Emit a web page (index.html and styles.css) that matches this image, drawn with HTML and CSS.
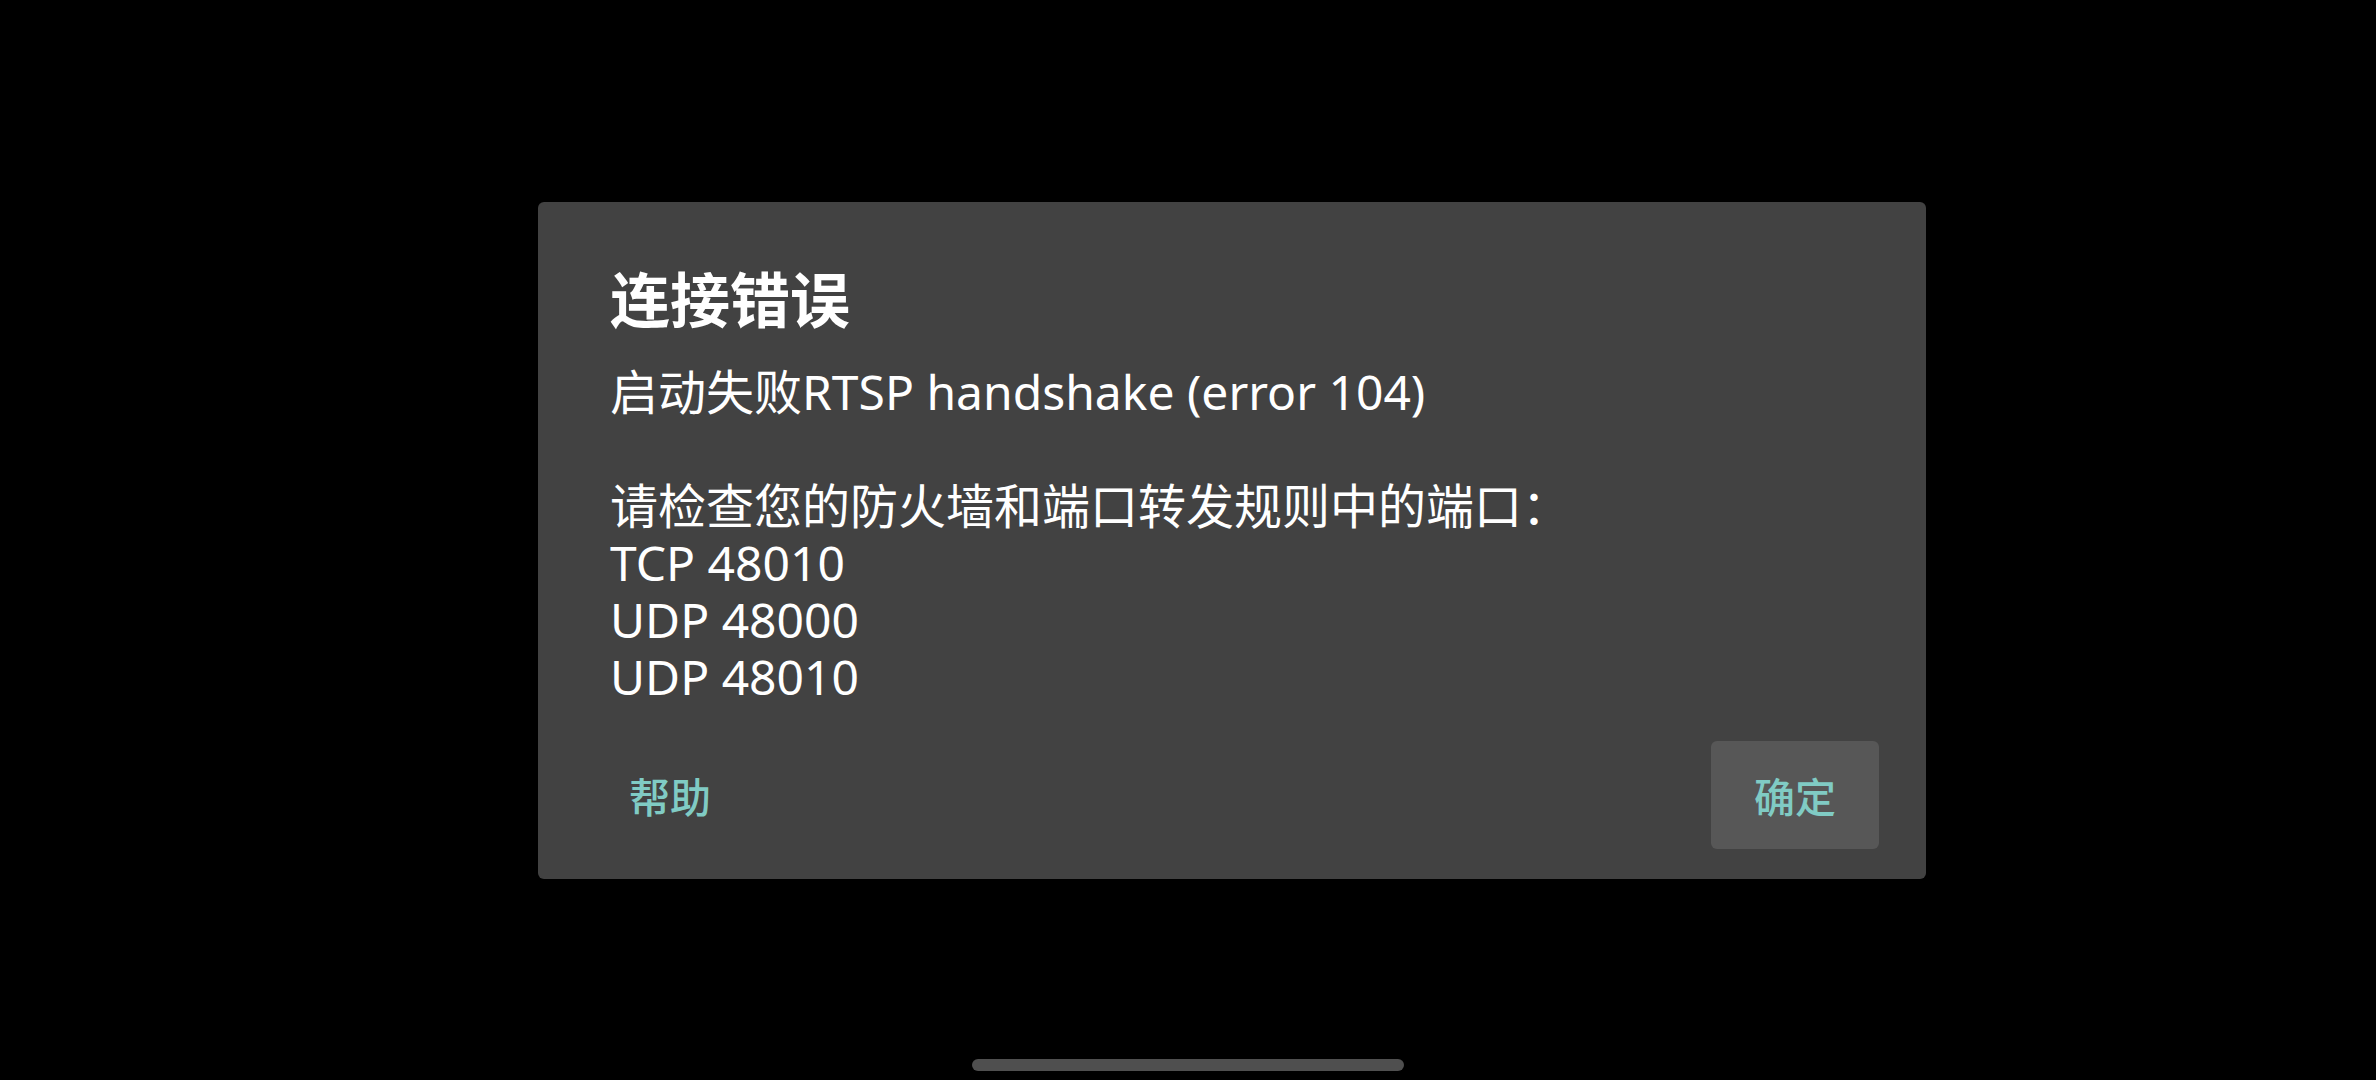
FILE: index.html
```html
<!DOCTYPE html>
<html lang="zh-CN">
<head>
<meta charset="utf-8">
<title>连接错误</title>
<link rel="stylesheet" href="styles.css">
</head>
<body>
<div class="screen">
  <div class="stage">
    <div class="dialog">
      <h1 class="title">连接错误</h1>
      <div class="message">
        <div class="line">启动失败RTSP handshake (error 104)</div>
        <div class="line blank">&nbsp;</div>
        <div class="line">请检查您的防火墙和端口转发规则中的端口：</div>
        <div class="line">TCP 48010</div>
        <div class="line">UDP 48000</div>
        <div class="line">UDP 48010</div>
      </div>
      <div class="actions">
        <button class="btn">帮助</button>
        <button class="btn btn-focused">确定</button>
      </div>
    </div>
  </div>
  <div class="home-bar"></div>
</div>
</body>
</html>
```
FILE: styles.css
```css
html, body {
  margin: 0;
  padding: 0;
  background: #000;
}
.screen {
  width: 2376px;
  height: 1080px;
  display: flex;
  flex-direction: column;
  overflow: hidden;
  font-family: "Noto Sans CJK SC", "Noto Sans", sans-serif;
}
.stage {
  padding: 202px 0 0 538px;
}
.dialog {
  width: 1388px;
  box-sizing: border-box;
  background: #424242;
  border-radius: 6px;
  padding-top: 60px;
  display: flex;
  flex-direction: column;
}
.title {
  margin: 0 72px;
  font-size: 60px;
  line-height: 70px;
  font-weight: 700;
  color: #ffffff;
}
.message {
  margin: 31px 72px 0;
  font-family: "Noto Sans", "Noto Sans CJK SC", sans-serif;
  font-size: 48px;
  line-height: 57px;
  color: #ffffff;
}
.line {
  white-space: nowrap;
}
.actions {
  margin-top: 36px;
  padding: 0 47px 30px 48px;
  display: flex;
  justify-content: space-between;
}
.btn {
  width: 168px;
  height: 108px;
  border: 0;
  border-radius: 6px;
  background: transparent;
  color: #80cbc4;
  font-family: "Noto Sans CJK SC", "Noto Sans", sans-serif;
  font-size: 41px;
  font-weight: 500;
  padding: 0;
  display: flex;
  align-items: center;
  justify-content: center;
}
.btn-focused {
  background: #575757;
}
.home-bar {
  margin: auto auto 9px;
  width: 432px;
  height: 12px;
  border-radius: 6px;
  background: #4f4f4f;
}
```
